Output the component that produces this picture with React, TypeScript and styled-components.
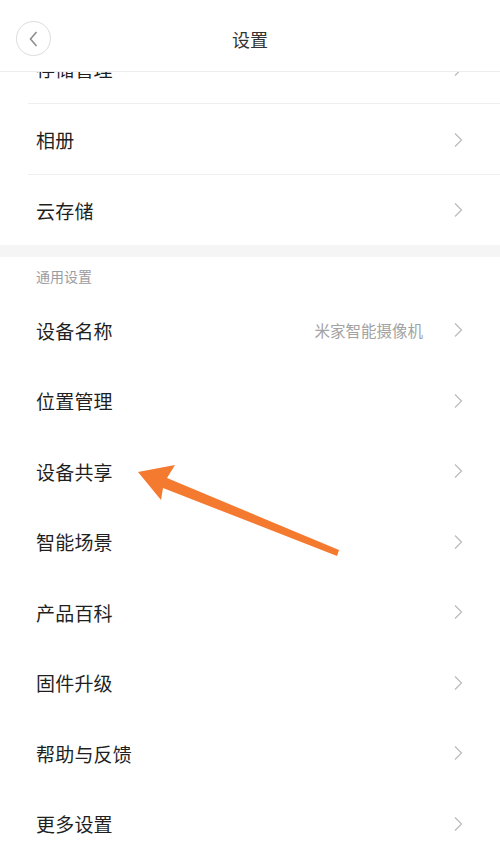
import styled, { createGlobalStyle } from 'styled-components';

const GlobalStyle = createGlobalStyle`
  html, body {
    margin: 0;
    padding: 0;
    background: #ffffff;
  }
  body {
    font-family: "Noto Sans CJK SC", "Noto Sans", sans-serif;
    -webkit-font-smoothing: antialiased;
  }
`;

const Page = styled.div`
  position: relative;
  width: 500px;
  height: 856px;
  overflow: hidden;
  background: #ffffff;
  display: flex;
  flex-direction: column;
`;

const Header = styled.header`
  position: relative;
  z-index: 2;
  flex: 0 0 auto;
  height: 72px;
  border-bottom: 1px solid #ededed;
  background: #ffffff;
  display: grid;
  grid-template-columns: 68px 1fr 68px;
  align-items: center;
  padding-top: 6px;
  box-sizing: border-box;
`;

const BackButton = styled.button`
  width: 35px;
  height: 35px;
  margin-left: 16px;
  border-radius: 50%;
  border: 1px solid #dcdcdc;
  background: #ffffff;
  padding: 0;
  display: flex;
  align-items: center;
  justify-content: center;
`;

const Title = styled.h1`
  margin: 0;
  text-align: center;
  font-size: 18px;
  font-weight: 400;
  color: #333333;
`;

const Viewport = styled.div`
  flex: 1 1 auto;
  overflow: hidden;
`;

const Content = styled.div`
  margin-top: -39px;
`;

const Group = styled.section``;

const Row = styled.div<{ $h: number; $divider?: boolean }>`
  height: ${p => p.$h}px;
  display: flex;
  align-items: center;
  padding: 0 37px 0 36px;
  position: relative;
  box-sizing: border-box;

  &::after {
    content: '';
    display: ${p => (p.$divider ? 'block' : 'none')};
    position: absolute;
    left: 28px;
    right: 0;
    bottom: 0;
    height: 1px;
    background: #efefef;
  }
`;

const Label = styled.span`
  flex: 1;
  font-size: 19px;
  color: #1f1f1f;
  letter-spacing: 0.2px;
`;

const Value = styled.span`
  font-size: 15.5px;
  color: #a3a3a3;
  margin-right: 30px;
`;

const Band = styled.div`
  height: 12px;
  background: #f5f5f5;
`;

const SectionTitle = styled.div`
  height: 38px;
  display: flex;
  align-items: center;
  padding-left: 36px;
  font-size: 14px;
  color: #9a9ca3;
`;

const ArrowLayer = styled.svg`
  position: absolute;
  left: 0;
  top: 0;
  z-index: 3;
  pointer-events: none;
`;

const Chevron = () => (
  <svg width="10" height="16" viewBox="0 0 10 16">
    <path d="M2 1.5 L8.5 8 L2 14.5" fill="none" stroke="#bdbdbd" strokeWidth="1.3" />
  </svg>
);

const BackIcon = () => (
  <svg width="14" height="18" viewBox="0 0 14 18">
    <path d="M9.5 2 L3.5 9 L9.5 16" fill="none" stroke="#8e8e8e" strokeWidth="1.6" />
  </svg>
);

const topItems = ['存储管理', '相册', '云存储'];

const generalItems: { label: string; value?: string }[] = [
  { label: '设备名称', value: '米家智能摄像机' },
  { label: '位置管理' },
  { label: '设备共享' },
  { label: '智能场景' },
  { label: '产品百科' },
  { label: '固件升级' },
  { label: '帮助与反馈' },
  { label: '更多设置' },
];

export default function App() {
  return (
    <>
      <GlobalStyle />
      <Page>
        <Header>
          <BackButton aria-label="返回">
            <BackIcon />
          </BackButton>
          <Title>设置</Title>
          <span />
        </Header>
        <Viewport>
          <Content>
            <Group>
              {topItems.map((item, i) => {
                const divider = i < topItems.length - 1;
                return (
                  <Row key={item} $h={divider ? 71 : 70} $divider={divider}>
                    <Label>{item}</Label>
                    <Chevron />
                  </Row>
                );
              })}
            </Group>
            <Band />
            <SectionTitle>通用设置</SectionTitle>
            <Group>
              {generalItems.map(item => (
                <Row key={item.label} $h={70.5}>
                  <Label>{item.label}</Label>
                  {item.value && <Value>{item.value}</Value>}
                  <Chevron />
                </Row>
              ))}
            </Group>
          </Content>
        </Viewport>
        <ArrowLayer width="500" height="856" viewBox="0 0 500 856">
          <polygon
            points="138,472 175,465 167,478 339,550 337,556 163,488 161,500"
            fill="#f47a30"
          />
        </ArrowLayer>
      </Page>
    </>
  );
}
